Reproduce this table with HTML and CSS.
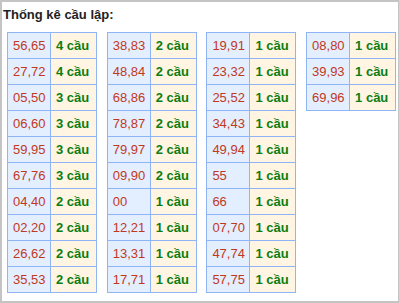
FILE: index.html
```html
<!DOCTYPE html>
<html>
<head>
<meta charset="utf-8">
<link rel="stylesheet" href="styles.css">
</head>
<body>
<div class="box">
  <div class="title">Thống kê cầu lập:</div>
  <div class="tables">
    <table class="tk">
      <tr><td class="num">56,65</td><td class="cnt">4 cầu</td></tr>
      <tr><td class="num">27,72</td><td class="cnt">4 cầu</td></tr>
      <tr><td class="num">05,50</td><td class="cnt">3 cầu</td></tr>
      <tr><td class="num">06,60</td><td class="cnt">3 cầu</td></tr>
      <tr><td class="num">59,95</td><td class="cnt">3 cầu</td></tr>
      <tr><td class="num">67,76</td><td class="cnt">3 cầu</td></tr>
      <tr><td class="num">04,40</td><td class="cnt">2 cầu</td></tr>
      <tr><td class="num">02,20</td><td class="cnt">2 cầu</td></tr>
      <tr><td class="num">26,62</td><td class="cnt">2 cầu</td></tr>
      <tr><td class="num">35,53</td><td class="cnt">2 cầu</td></tr>
    </table>
    <table class="tk">
      <tr><td class="num">38,83</td><td class="cnt">2 cầu</td></tr>
      <tr><td class="num">48,84</td><td class="cnt">2 cầu</td></tr>
      <tr><td class="num">68,86</td><td class="cnt">2 cầu</td></tr>
      <tr><td class="num">78,87</td><td class="cnt">2 cầu</td></tr>
      <tr><td class="num">79,97</td><td class="cnt">2 cầu</td></tr>
      <tr><td class="num">09,90</td><td class="cnt">2 cầu</td></tr>
      <tr><td class="num">00</td><td class="cnt">1 cầu</td></tr>
      <tr><td class="num">12,21</td><td class="cnt">1 cầu</td></tr>
      <tr><td class="num">13,31</td><td class="cnt">1 cầu</td></tr>
      <tr><td class="num">17,71</td><td class="cnt">1 cầu</td></tr>
    </table>
    <table class="tk">
      <tr><td class="num">19,91</td><td class="cnt">1 cầu</td></tr>
      <tr><td class="num">23,32</td><td class="cnt">1 cầu</td></tr>
      <tr><td class="num">25,52</td><td class="cnt">1 cầu</td></tr>
      <tr><td class="num">34,43</td><td class="cnt">1 cầu</td></tr>
      <tr><td class="num">49,94</td><td class="cnt">1 cầu</td></tr>
      <tr><td class="num">55</td><td class="cnt">1 cầu</td></tr>
      <tr><td class="num">66</td><td class="cnt">1 cầu</td></tr>
      <tr><td class="num">07,70</td><td class="cnt">1 cầu</td></tr>
      <tr><td class="num">47,74</td><td class="cnt">1 cầu</td></tr>
      <tr><td class="num">57,75</td><td class="cnt">1 cầu</td></tr>
    </table>
    <table class="tk">
      <tr><td class="num">08,80</td><td class="cnt">1 cầu</td></tr>
      <tr><td class="num">39,93</td><td class="cnt">1 cầu</td></tr>
      <tr><td class="num">69,96</td><td class="cnt">1 cầu</td></tr>
    </table>
  </div>
</div>
</body>
</html>
```
FILE: styles.css
```css
html, body {
  margin: 0;
  padding: 0;
  background: #fff;
}
.box {
  box-sizing: border-box;
  width: 399px;
  height: 303px;
  border: 2px solid #c4c4c4;
  border-right-width: 1px;
  padding: 5px 0 0 1px;
  font-family: "Liberation Sans", Arial, sans-serif;
}
.title {
  font-size: 13px;
  font-weight: bold;
  color: #222;
  line-height: 16px;
}
.tables {
  display: flex;
  align-items: flex-start;
  gap: 9.7px;
  margin-top: 9px;
  padding-left: 4px;
}
.tk {
  border-collapse: collapse;
  table-layout: fixed;
  width: 89px;
  font-size: 13px;
}
.tk td {
  border: 1px solid #8fb5f7;
  height: 26px;
  padding: 0 0 0 5px;
  box-sizing: border-box;
  white-space: nowrap;
}
.num {
  width: 43px;
  background: #e3eeff;
  color: #c0391e;
}
.cnt {
  width: 46px;
  background: #fff5e2;
  color: #0c7d12;
  font-weight: bold;
}
```
